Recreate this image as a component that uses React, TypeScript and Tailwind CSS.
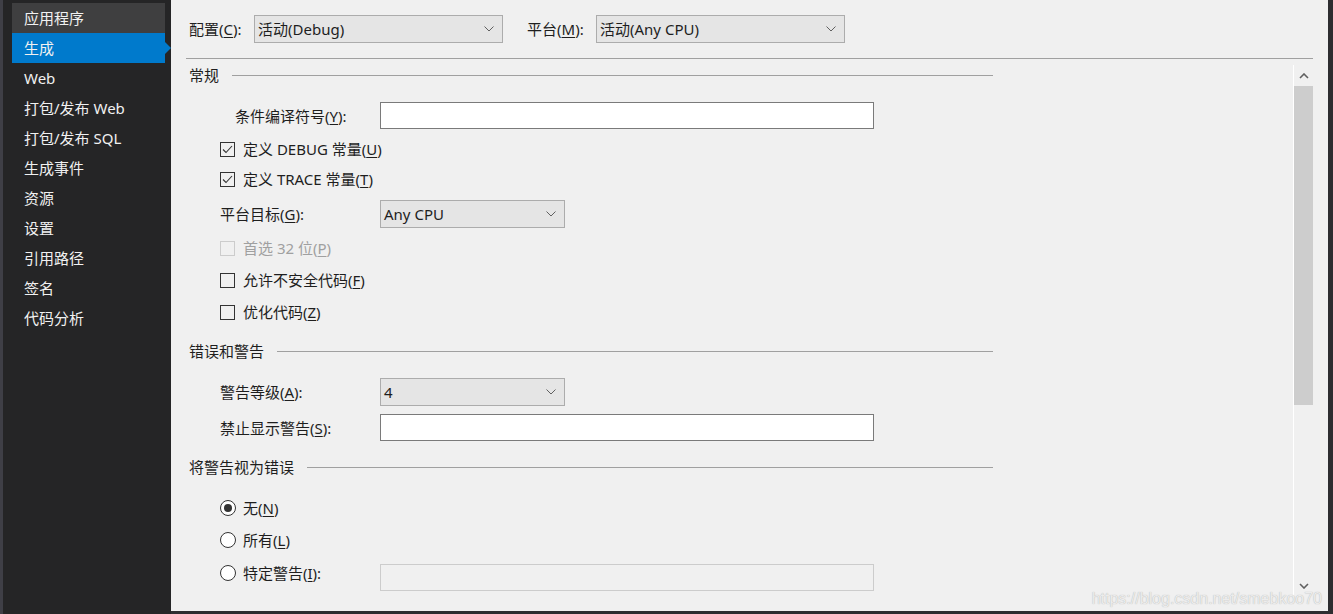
import type { ReactNode } from 'react';

// 项目属性页 — 生成 tab
const FONT = { fontFamily: '"Noto Sans", "Noto Sans CJK SC", sans-serif' };

const NAV = ['应用程序', '生成', 'Web', '打包/发布 Web', '打包/发布 SQL', '生成事件', '资源', '设置', '引用路径', '签名', '代码分析'];

function Key({ k }: { k: string }) {
  return <span className="underline underline-offset-[2px] decoration-1">{k}</span>;
}

function Chevron() {
  return (
    <svg width="10" height="6" viewBox="0 0 10 6" className="shrink-0">
      <path d="M0.5 0.5 L5 5 L9.5 0.5" fill="none" stroke="#606060" strokeWidth="1" />
    </svg>
  );
}

function Select({ value, width }: { value: string; width: string }) {
  return (
    <div className={`${width} h-[28px] flex items-center justify-between bg-[#e5e5e5] border border-[#acacac] pl-[3px] pr-[8px]`}>
      <span className="leading-[20px]">{value}</span>
      <Chevron />
    </div>
  );
}

function Section({ title, className }: { title: string; className: string }) {
  return (
    <div className={`flex items-center h-[20px] w-[804px] ${className}`}>
      <span className="leading-[20px]">{title}</span>
      <div className="flex-1 ml-[13px] h-px bg-[#a0a0a0]" />
    </div>
  );
}

function Check({ checked, disabled, children, className }: { checked?: boolean; disabled?: boolean; children: ReactNode; className: string }) {
  return (
    <div className={`flex items-center h-[20px] pl-[31px] ${className}`}>
      <div className={`w-[15px] h-[15px] border bg-[#f0f0f0] flex items-center justify-center ${disabled ? 'border-[#cccccc]' : 'border-[#333333]'}`}>
        {checked && (
          <svg width="11" height="9" viewBox="0 0 11 9">
            <path d="M1 4.5 L4 7.5 L10 1" fill="none" stroke="#333333" strokeWidth="1.1" />
          </svg>
        )}
      </div>
      <span className={`ml-[8px] leading-[20px] ${disabled ? 'text-[#a0a0a0]' : ''}`}>{children}</span>
    </div>
  );
}

function Radio({ checked, children, className }: { checked?: boolean; children: ReactNode; className: string }) {
  return (
    <div className={`flex items-center h-[20px] pl-[31px] ${className}`}>
      <div className="w-[16px] h-[16px] rounded-full border border-[#333333] bg-white flex items-center justify-center">
        {checked && <div className="w-[8px] h-[8px] rounded-full bg-[#333333]" />}
      </div>
      <span className="ml-[7px] leading-[20px]">{children}</span>
    </div>
  );
}

export default function App() {
  return (
    <div className="w-[1333px] h-[614px] flex bg-[#2d2d30] text-[15px] overflow-hidden" style={FONT}>
      {/* 左侧导航 */}
      <div className="w-[171px] h-full bg-[#252526] border-l-[3px] border-[#3f3f46] pl-[9px] pt-[3px]">
        {NAV.map((item, i) => (
          <div
            key={item}
            className={`relative w-[153px] h-[30px] flex items-center pl-[12px] text-[#f1f1f1] leading-[20px] ${
              i === 0 ? 'bg-[#3f3f40]' : i === 1 ? 'bg-[#007acc]' : ''
            }`}
          >
            {item}
            {i === 1 && (
              <div className="absolute right-[-6px] top-[9px] w-0 h-0 border-y-[6px] border-y-transparent border-l-[6px] border-l-[#007acc]" />
            )}
          </div>
        ))}
      </div>

      {/* 主面板 */}
      <div className="relative w-[1157px] h-[611px] bg-[#f0f0f0] text-[#1e1e1e] flex flex-col">
        <div className="mx-[15px] h-[59px] border-b border-[#a0a0a0] flex items-center pl-[3px] pb-[1px]">
          <span className="w-[65px] leading-[20px]">配置(<Key k="C" />):</span>
          <Select value="活动(Debug)" width="w-[249px]" />
          <span className="ml-[24px] w-[69px] leading-[20px]">平台(<Key k="M" />):</span>
          <Select value="活动(Any CPU)" width="w-[249px]" />
        </div>

        <div className="flex flex-1 min-h-0">
          <div className="w-[1122px] pl-[18px] flex flex-col">
            <Section title="常规" className="mt-[6px]" />

            <div className="flex items-center h-[27px] mt-[17px]">
              <span className="ml-[46px] w-[145px] leading-[20px]">条件编译符号(<Key k="Y" />):</span>
              <div className="w-[494px] h-[27px] bg-white border border-[#7a7a7a]" />
            </div>

            <Check checked className="mt-[10px]">定义 DEBUG 常量(<Key k="U" />)</Check>
            <Check checked className="mt-[10px]">定义 TRACE 常量(<Key k="T" />)</Check>

            <div className="flex items-center h-[27px] mt-[11px]">
              <span className="ml-[31px] w-[160px] leading-[20px]">平台目标(<Key k="G" />):</span>
              <Select value="Any CPU" width="w-[185px]" />
            </div>

            <Check disabled className="mt-[11px]">首选 32 位(<Key k="P" />)</Check>
            <Check className="mt-[12px]">允许不安全代码(<Key k="F" />)</Check>
            <Check className="mt-[12px]">优化代码(<Key k="Z" />)</Check>

            <Section title="错误和警告" className="mt-[19px]" />

            <div className="flex items-center h-[27px] mt-[17px]">
              <span className="ml-[31px] w-[160px] leading-[20px]">警告等级(<Key k="A" />):</span>
              <Select value="4" width="w-[185px]" />
            </div>
            <div className="flex items-center h-[27px] mt-[9px]">
              <span className="ml-[31px] w-[160px] leading-[20px]">禁止显示警告(<Key k="S" />):</span>
              <div className="w-[494px] h-[27px] bg-white border border-[#7a7a7a]" />
            </div>

            <Section title="将警告视为错误" className="mt-[16px]" />

            <Radio checked className="mt-[21px]">无(<Key k="N" />)</Radio>
            <Radio className="mt-[12px]">所有(<Key k="L" />)</Radio>
            <div className="flex items-start h-[27px] mt-[14px]">
              <div className="flex items-center h-[20px] mt-[-1px] pl-[31px] w-[191px]">
                <div className="w-[16px] h-[16px] rounded-full border border-[#333333] bg-white" />
                <span className="ml-[7px] leading-[20px]">特定警告(<Key k="I" />):</span>
              </div>
              <div className="w-[494px] h-[27px] bg-[#f0f0f0] border border-[#cccccc]" />
            </div>
          </div>

          {/* 滚动条 */}
          <div className="w-[20px] mt-[6px] h-[533px] border-l border-white flex flex-col">
            <div className="h-[21px] flex items-center justify-center">
              <svg width="10" height="6" viewBox="0 0 10 6">
                <path d="M1 5 L5 1 L9 5" fill="none" stroke="#606060" strokeWidth="1.6" />
              </svg>
            </div>
            <div className="h-[319px] bg-[#cdcdcd]" />
            <div className="flex-1" />
            <div className="h-[24px] flex items-center justify-center">
              <svg width="10" height="6" viewBox="0 0 10 6">
                <path d="M1 1 L5 5 L9 1" fill="none" stroke="#606060" strokeWidth="1.6" />
              </svg>
            </div>
          </div>
        </div>

        <div
          className="absolute right-[6px] bottom-[2px] text-[16px] leading-[20px] text-[#ececec] [text-shadow:0_0_1px_#a8a8a8]"
          style={{ fontFamily: '"Liberation Sans", Arial, sans-serif' }}
        >
          https://blog.csdn.net/smebkoo70
        </div>
      </div>
    </div>
  );
}
